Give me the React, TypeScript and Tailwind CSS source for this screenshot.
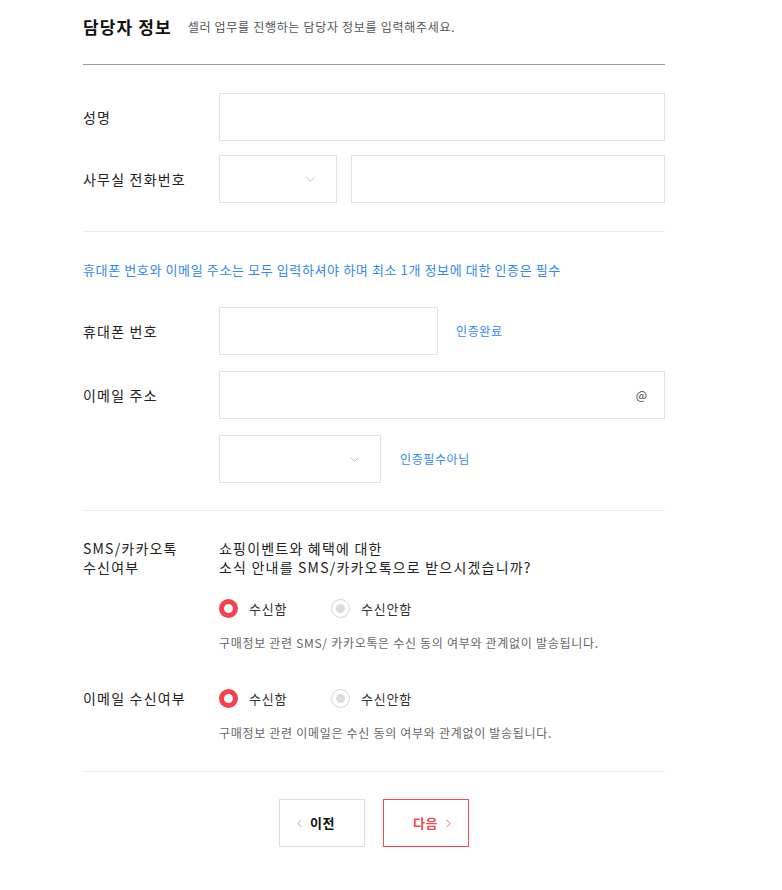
import { ChevronDown, ChevronLeft, ChevronRight } from 'lucide-react';

const font = { fontFamily: '"Noto Sans CJK KR", "Noto Sans", sans-serif' };

const Label = ({ children }: { children: React.ReactNode }) => (
  <div className="w-[136px] shrink-0 text-[14px] leading-[19px] tracking-[1.2px] text-[#222]">{children}</div>
);

const Box = ({ className = '', children }: { className?: string; children?: React.ReactNode }) => (
  <div className={`h-[48px] border border-[#e1e1e1] bg-white relative flex items-center ${className}`}>{children}</div>
);

const Select = ({ width }: { width: string }) => (
  <Box className={`${width} justify-end pr-[18px]`}>
    <ChevronDown size={15} strokeWidth={1.2} className="text-[#aaa]" />
  </Box>
);

const Radio = ({ on, label }: { on: boolean; label: string }) => (
  <div className="flex items-center gap-[11px]">
    {on ? (
      <span className="w-[19px] h-[19px] rounded-full border-[5px] border-[#f2414f] bg-white" />
    ) : (
      <span className="w-[19px] h-[19px] rounded-full border border-[#d6d6d6] bg-white flex items-center justify-center">
        <span className="w-[9px] h-[9px] rounded-full bg-[#dcdcdc]" />
      </span>
    )}
    <span className="text-[13px] tracking-[0.8px] text-[#333]">{label}</span>
  </div>
);

const Radios = () => (
  <div className="flex items-center h-[19px]">
    <div className="w-[112px]">
      <Radio on label="수신함" />
    </div>
    <Radio on={false} label="수신안함" />
  </div>
);

export default function App() {
  return (
    <div className="min-h-[890px] bg-white" style={font}>
      <div className="ml-[83px] w-[582px]">
        {/* Header */}
        <div className="h-[65px] border-b border-[#999] flex items-start pt-[15px]">
          <h1 className="text-[17px] leading-[24px] font-bold tracking-[1.1px] text-[#111]">담당자 정보</h1>
          <p className="ml-[16px] mt-[3px] text-[12px] leading-[18px] tracking-[0.7px] text-[#555]">
            셀러 업무를 진행하는 담당자 정보를 입력해주세요.
          </p>
        </div>

        {/* Name / office phone */}
        <div className="pt-[28px] pb-[28px] border-b border-[#eaeaea] flex flex-col gap-[14px]">
          <div className="flex items-center">
            <Label>성명</Label>
            <Box className="flex-1" />
          </div>
          <div className="flex items-center">
            <Label>사무실 전화번호</Label>
            <Select width="w-[118px]" />
            <Box className="flex-1 ml-[14px]" />
          </div>
        </div>

        {/* Mobile / email */}
        <div className="pt-[28px] pb-[27px] border-b border-[#eaeaea]">
          <p className="text-[13px] leading-[20px] tracking-[0.62px] text-[#3287ea]">
            휴대폰 번호와 이메일 주소는 모두 입력하셔야 하며 최소 1개 정보에 대한 인증은 필수
          </p>
          <div className="mt-[27px] flex flex-col gap-[16px]">
            <div className="flex items-center">
              <Label>휴대폰 번호</Label>
              <Box className="w-[219px]" />
              <span className="ml-[18px] text-[12px] tracking-[0.6px] text-[#3287ea]">인증완료</span>
            </div>
            <div className="flex items-center">
              <Label>이메일 주소</Label>
              <Box className="flex-1 justify-end pr-[17px]">
                <span className="text-[12px] text-[#444]">@</span>
              </Box>
            </div>
            <div className="flex items-center">
              <Label>{''}</Label>
              <Select width="w-[162px]" />
              <span className="ml-[19px] text-[12px] tracking-[0.6px] text-[#3287ea]">인증필수아님</span>
            </div>
          </div>
        </div>

        {/* Marketing consent */}
        <div className="pt-[28px] pb-[29px] border-b border-[#eaeaea]">
          <div className="flex items-start">
            <Label>
              SMS/카카오톡
              <br />
              수신여부
            </Label>
            <div>
              <p className="text-[14px] leading-[19px] tracking-[1.2px] text-[#222]">
                쇼핑이벤트와 혜택에 대한
                <br />
                소식 안내를 SMS/카카오톡으로 받으시겠습니까?
              </p>
              <div className="mt-[22px]">
                <Radios />
              </div>
              <p className="mt-[16px] text-[12px] leading-[18px] tracking-[0.7px] text-[#666]">
                구매정보 관련 SMS/ 카카오톡은 수신 동의 여부와 관계없이 발송됩니다.
              </p>
            </div>
          </div>
          <div className="mt-[37px] flex items-start">
            <Label>이메일 수신여부</Label>
            <div>
              <Radios />
              <p className="mt-[16px] text-[12px] leading-[18px] tracking-[0.7px] text-[#666]">
                구매정보 관련 이메일은 수신 동의 여부와 관계없이 발송됩니다.
              </p>
            </div>
          </div>
        </div>

        {/* Buttons */}
        <div className="pt-[27px] flex justify-center gap-[18px]">
          <button className="w-[86px] h-[48px] border border-[#dcdcdc] bg-white flex items-center justify-center gap-[4px] pr-[16px]">
            <ChevronLeft size={13} strokeWidth={1.6} className="text-[#999]" />
            <span className="text-[13px] font-bold tracking-[0.5px] text-[#111]">이전</span>
          </button>
          <button className="w-[86px] h-[48px] border border-[#f04c58] bg-white flex items-center justify-center gap-[4px] pl-[16px]">
            <span className="text-[13px] font-bold tracking-[0.5px] text-[#f04c58]">다음</span>
            <ChevronRight size={13} strokeWidth={1.6} className="text-[#f04c58]" />
          </button>
        </div>
      </div>
    </div>
  );
}
